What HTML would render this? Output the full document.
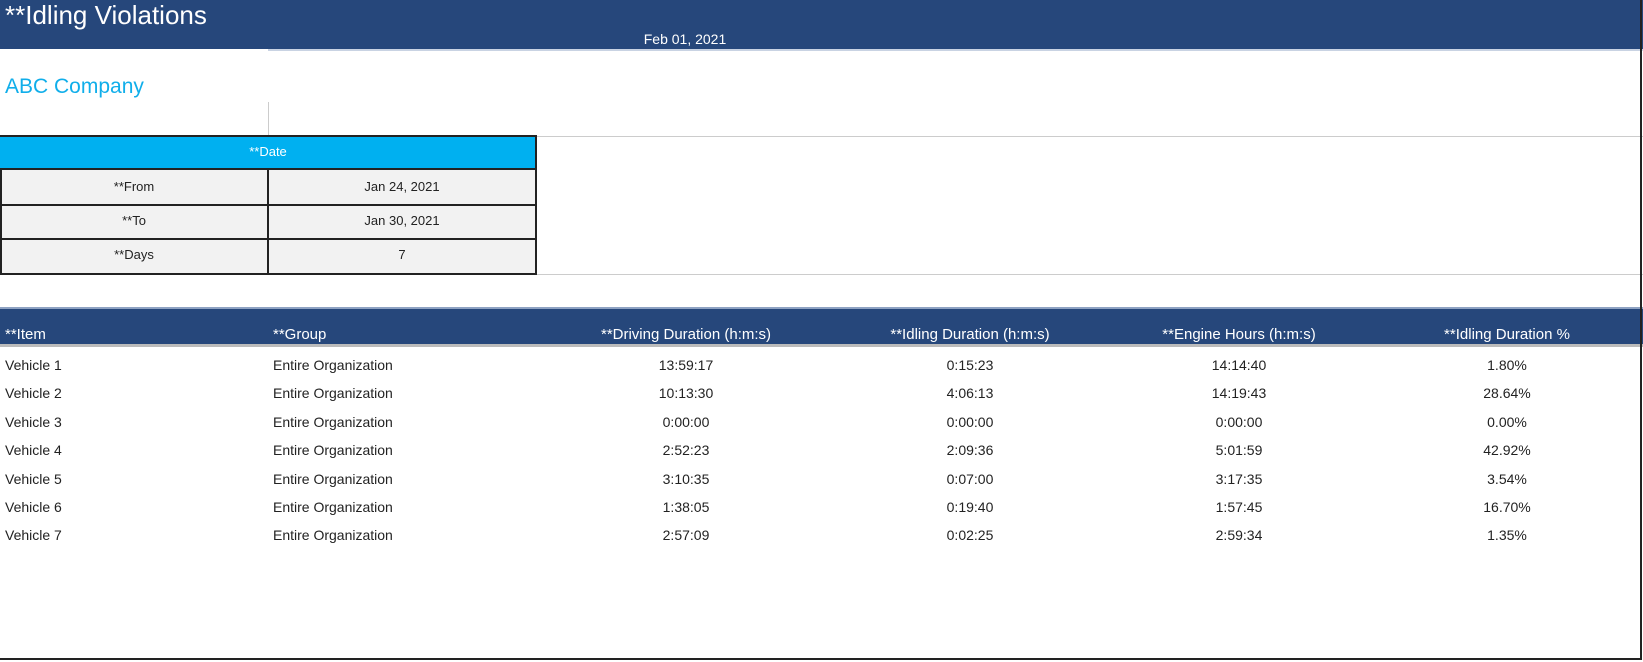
<!DOCTYPE html>
<html><head><meta charset="utf-8"><style>
*{margin:0;padding:0;box-sizing:border-box}
body{width:1643px;height:662px;position:relative;background:#fff;font-family:"Liberation Sans",sans-serif;overflow:hidden;color:#222}
.a{position:absolute;white-space:nowrap}
.c{transform:translateX(-50%)}
</style></head><body>
<div class="a" style="left:0;top:0;width:1643px;height:49px;background:#26477b"></div>
<div class="a" style="left:268px;top:49px;width:1375px;height:2px;background:#c9d3e3"></div>
<div class="a" style="left:5px;top:0px;font-size:26px;color:#fff">**Idling Violations</div>
<div class="a c" style="left:685px;top:31px;font-size:14px;color:#fff">Feb 01, 2021</div>
<div class="a" style="left:5px;top:75px;font-size:21px;color:#10aeea">ABC Company</div>
<div class="a" style="left:268px;top:102px;width:1px;height:34px;background:#ccc"></div>
<div class="a" style="left:536px;top:136px;width:1107px;height:1px;background:#ccc"></div>
<div class="a" style="left:0;top:274px;width:1643px;height:1px;background:#ccc"></div>
<div class="a" style="left:0;top:135px;width:537px;height:140px;border:2px solid #222;background:#f2f2f2"></div>
<div class="a" style="left:0;top:137px;width:535px;height:33px;background:#00b0f0;border-bottom:2px solid #222"></div>
<div class="a c" style="left:268px;top:144px;font-size:13px;color:#fff">**Date</div>
<div class="a" style="left:0;top:204px;width:536px;height:2px;background:#222"></div>
<div class="a" style="left:0;top:238px;width:536px;height:2px;background:#222"></div>
<div class="a" style="left:267px;top:170px;width:2px;height:104px;background:#222"></div>
<div class="a c" style="left:134px;top:179px;font-size:13px">**From</div>
<div class="a c" style="left:402px;top:179px;font-size:13px">Jan 24, 2021</div>
<div class="a c" style="left:134px;top:213px;font-size:13px">**To</div>
<div class="a c" style="left:402px;top:213px;font-size:13px">Jan 30, 2021</div>
<div class="a c" style="left:134px;top:247px;font-size:13px">**Days</div>
<div class="a c" style="left:402px;top:247px;font-size:13px">7</div>
<div class="a" style="left:0;top:307px;width:1643px;height:37px;background:#26477b;border-top:2px solid #8ea2c2"></div>
<div class="a" style="left:0;top:344px;width:1643px;height:3px;background:#bbb"></div>
<div class="a" style="left:5px;top:326px;font-size:15px;color:#fff">**Item</div>
<div class="a" style="left:273px;top:326px;font-size:15px;color:#fff">**Group</div>
<div class="a c" style="left:686px;top:326px;font-size:15px;color:#fff">**Driving Duration (h:m:s)</div>
<div class="a c" style="left:970px;top:326px;font-size:15px;color:#fff">**Idling Duration (h:m:s)</div>
<div class="a c" style="left:1239px;top:326px;font-size:15px;color:#fff">**Engine Hours (h:m:s)</div>
<div class="a c" style="left:1507px;top:326px;font-size:15px;color:#fff">**Idling Duration %</div>
<div id="rows"></div>
<div class="a" style="left:1640px;top:0;width:2px;height:660px;background:#222"></div>
<div class="a" style="left:0;top:658px;width:1642px;height:2px;background:#222"></div>
<script>
var d=[["13:59:17","0:15:23","14:14:40","1.80%"],["10:13:30","4:06:13","14:19:43","28.64%"],["0:00:00","0:00:00","0:00:00","0.00%"],["2:52:23","2:09:36","5:01:59","42.92%"],["3:10:35","0:07:00","3:17:35","3.54%"],["1:38:05","0:19:40","1:57:45","16.70%"],["2:57:09","0:02:25","2:59:34","1.35%"]];
var h="",cx=[686,970,1239,1507];
d.forEach(function(r,i){var t=357+i*28.4;
h+='<div class="a" style="left:5px;top:'+t+'px;font-size:14px">Vehicle '+(i+1)+'</div>';
h+='<div class="a" style="left:273px;top:'+t+'px;font-size:14px">Entire Organization</div>';
r.forEach(function(v,j){h+='<div class="a c" style="left:'+cx[j]+'px;top:'+t+'px;font-size:14px">'+v+'</div>';});});
document.getElementById("rows").innerHTML=h;
</script>
</body></html>
